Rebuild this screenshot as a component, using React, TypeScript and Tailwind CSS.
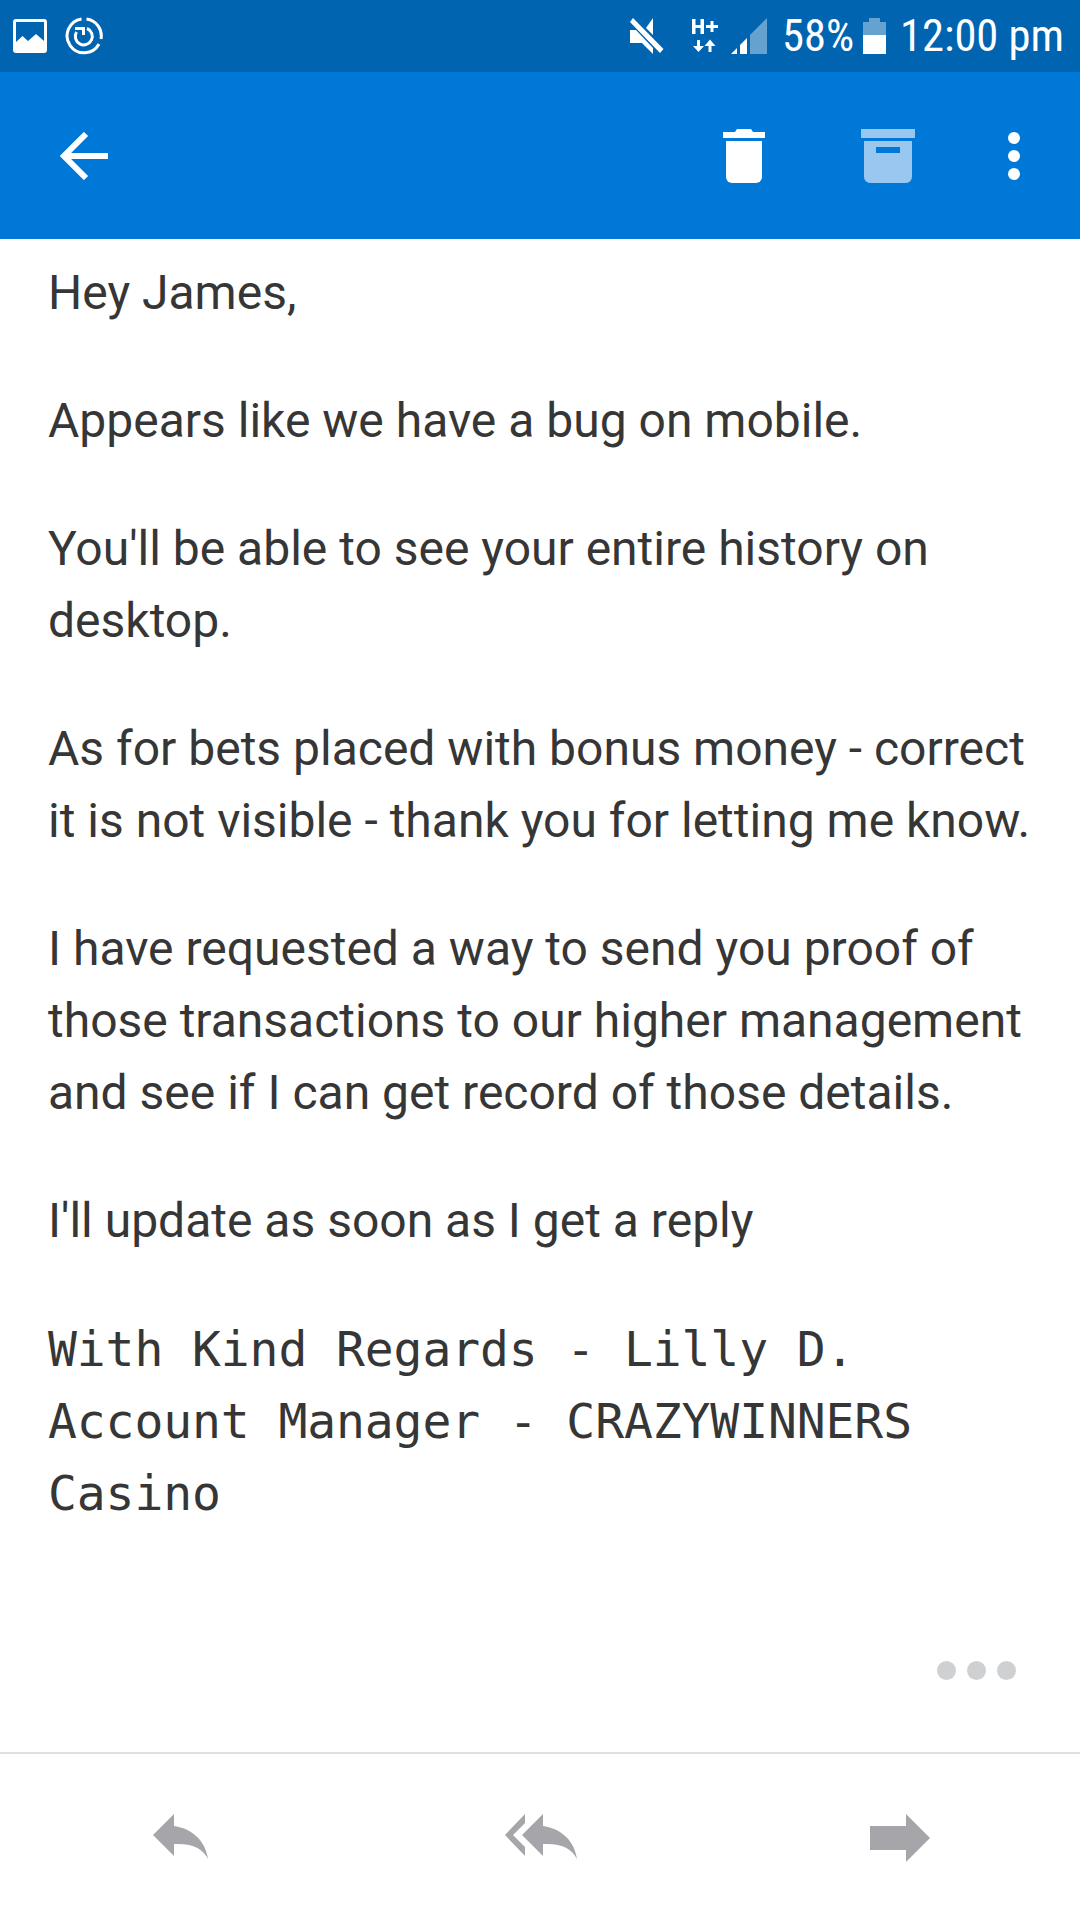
import React from 'react';

const paragraphs = [
  'Hey James,',
  'Appears like we have a bug on mobile.',
  "You'll be able to see your entire history on desktop.",
  'As for bets placed with bonus money - correct it is not visible - thank you for letting me know.',
  'I have requested a way to send you proof of those transactions to our higher management and see if I can get record of those details.',
  "I'll update as soon as I get a reply",
];

const ImageIcon = () => (
  <svg width="34" height="34" viewBox="0 0 34 34" fill="white">
    <path fillRule="evenodd" d="M3 0h28a3 3 0 0 1 3 3v28a3 3 0 0 1-3 3H3a3 3 0 0 1-3-3V3a3 3 0 0 1 3-3Zm0 3v20l6.500-6 5.500 5 8-7 8 7V3Z" />
  </svg>
);

const TimerIcon = () => (
  <svg width="38" height="38" viewBox="0 0 38 38" fill="none" stroke="white" strokeWidth="3">
    <path d="M21.500 2A17 17 0 0 1 36 22" />
    <path d="M34 27A17 17 0 1 1 16.500 2" />
    <path d="M22 11.500A8.500 8.500 0 1 1 11.500 15" />
    <path d="M10 11.500h8.500V18" />
  </svg>
);

const MuteIcon = () => (
  <svg width="34" height="36" viewBox="0 0 34 36" fill="white">
    <path d="M0 12h6l17 18v6L12 25H0Z" />
    <path d="M16 10 23 0v17Z" />
    <path d="M3 0l30.500 31-3.500 4L0 4Z" />
  </svg>
);

const DataIcon = () => (
  <svg width="26" height="34" viewBox="0 0 26 34" fill="white">
    <path d="M0 0h3.500v6h5V0H12v15H8.500V9h-5v6H0Z" />
    <path d="M14 6h4.500V2h3v4H26v3h-4.500v4h-3V9H14Z" />
    <path d="M5 21h3v6h4l-5.500 6L1 27h4Z" />
    <path d="M16.500 33v-6H12.500l5.500-6.500 5.500 6.500h-4v6Z" />
  </svg>
);

const SignalIcon = () => (
  <svg width="36" height="36" viewBox="0 0 36 36" fill="white">
    <path d="M0 36 6 30v6Z" />
    <path d="M9 36V27l7-7v16Z" />
    <path d="M19 36V17L36 0v36Z" fillOpacity="0.4" />
  </svg>
);

const BatteryIcon = () => (
  <svg width="23" height="36" viewBox="0 0 23 36" fill="white">
    <path d="M0 17V4h6V0h11v4h6v13Z" fillOpacity="0.4" />
    <path d="M0 17h23v19H0Z" />
  </svg>
);

const BackIcon = () => (
  <svg width="48" height="48" viewBox="0 0 48 48" fill="none" stroke="white" strokeWidth="6">
    <path d="M26 2 4 24l22 22" />
    <path d="M4 24h44" />
  </svg>
);

const TrashIcon = () => (
  <svg width="42" height="54" viewBox="0 0 42 54" fill="white">
    <path d="M12 3 14 0h14l2 3h12v6H0V3Z" />
    <path d="M3 12h36v36a6 6 0 0 1-6 6H9a6 6 0 0 1-6-6Z" />
  </svg>
);

const ArchiveIcon = () => (
  <svg width="54" height="54" viewBox="0 0 54 54" fill="#99c7ef">
    <path d="M0 0h54v9H0Z" />
    <path fillRule="evenodd" d="M3 12h48v36a6 6 0 0 1-6 6H9a6 6 0 0 1-6-6Zm12 6v6h24v-6Z" />
  </svg>
);

const ReplyIcon = () => (
  <svg width="55" height="46" viewBox="0 0 55 46" fill="#a6a6aa">
    <path d="M0 21 21 0v12C36 14 52 24 55 45 50 35 40 29 21 30v12Z" />
  </svg>
);

const ReplyAllIcon = () => (
  <svg width="72" height="46" viewBox="0 0 72 46" fill="#a6a6aa">
    <path d="M0 21 20 0v9L8 21l12 12v9Z" />
    <path d="M17 21 38 0v12C53 14 69 24 72 45 67 35 57 29 38 30v12Z" />
  </svg>
);

const ForwardIcon = () => (
  <svg width="60" height="48" viewBox="0 0 60 48" fill="#a6a6aa">
    <path d="M0 12h36V0l24 24-24 24V36H0Z" />
  </svg>
);

export default function App() {
  return (
    <div className="w-[1080px] h-[1920px] flex flex-col bg-white overflow-hidden font-['Roboto',sans-serif]">
      <div className="h-[72px] bg-[#0064b1] flex items-center text-white shrink-0">
        <div className="ml-[13px]"><ImageIcon /></div>
        <div className="ml-[18px]"><TimerIcon /></div>
        <div className="flex-1" />
        <MuteIcon />
        <div className="ml-[28px]"><DataIcon /></div>
        <div className="ml-[13px]"><SignalIcon /></div>
        <span className="ml-[15px] text-[44.5px] leading-none [font-stretch:75%]">58%</span>
        <div className="ml-[9px]"><BatteryIcon /></div>
        <span className="ml-[14px] mr-[16px] text-[44.5px] leading-none [font-stretch:75%]">12:00 pm</span>
      </div>

      <div className="h-[167px] bg-[#0078d8] flex items-center shrink-0">
        <div className="ml-[60px]"><BackIcon /></div>
        <div className="flex-1" />
        <TrashIcon />
        <div className="ml-[96px]"><ArchiveIcon /></div>
        <div className="ml-[93px] mr-[60px] flex flex-col gap-[6px]">
          <div className="w-3 h-3 rounded-full bg-white" />
          <div className="w-3 h-3 rounded-full bg-white" />
          <div className="w-3 h-3 rounded-full bg-white" />
        </div>
      </div>

      <div className="flex-1 pl-[48px] pr-[40px] pt-[18px] text-[#363636] text-[48px] leading-[72px]">
        {paragraphs.map(text => (
          <p key={text} className="mb-[56px]">{text}</p>
        ))}
        <p className="font-['DejaVu_Sans_Mono',monospace] tracking-[-0.1px]">
          With Kind Regards - Lilly D.
          <br />
          Account Manager - CRAZYWINNERS Casino
        </p>
      </div>

      <div className="flex justify-end gap-[11px] pr-[64px] pb-[72px] shrink-0">
        <div className="w-[19px] h-[19px] rounded-full bg-[#cfd0d1]" />
        <div className="w-[19px] h-[19px] rounded-full bg-[#cfd0d1]" />
        <div className="w-[19px] h-[19px] rounded-full bg-[#cfd0d1]" />
      </div>

      <div className="h-[168px] border-t-2 border-[#e0e0e0] flex items-start pt-[60px] shrink-0">
        <div className="ml-[153px]"><ReplyIcon /></div>
        <div className="ml-[297px]"><ReplyAllIcon /></div>
        <div className="ml-[293px]"><ForwardIcon /></div>
      </div>
    </div>
  );
}
